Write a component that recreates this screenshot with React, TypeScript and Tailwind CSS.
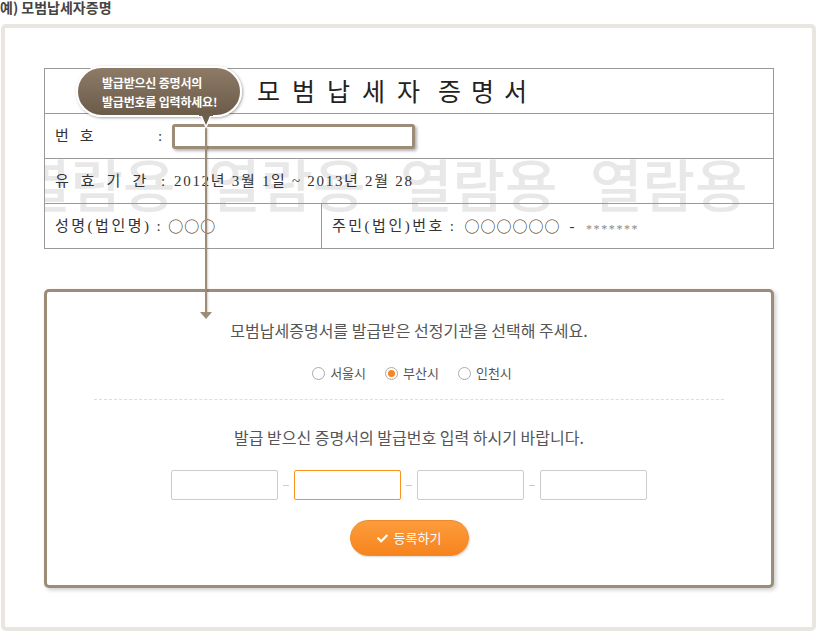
import { FaCheck } from "react-icons/fa";

const sans = "font-['Noto_Sans_CJK_KR','Noto_Sans',sans-serif]";

function Radio({ label, checked = false }: { label: string; checked?: boolean }) {
  return (
    <label className="flex items-center gap-[5px]">
      <span className="flex h-[13px] w-[13px] items-center justify-center rounded-full border border-[#aaa] bg-white">
        {checked && <span className="h-[7px] w-[7px] rounded-full bg-[#f7861f]" />}
      </span>
      <span>{label}</span>
    </label>
  );
}

function Field({ active = false }: { active?: boolean }) {
  return (
    <input
      type="text"
      className={`h-[30px] w-[107px] rounded-[2px] border bg-white ${
        active ? "border-[#f7931e]" : "border-[#ccc]"
      }`}
    />
  );
}

const Dash = () => <span className="h-px w-[6px] bg-[#ccc]" />;

// the sample's circles are full-width CJK glyphs, not the small serif ones
const Circles = ({ n }: { n: number }) => (
  <span className={`${sans} tracking-[1px]`}>{"○".repeat(n)}</span>
);

export default function App() {
  return (
    <div className={`relative h-[633px] w-[818px] overflow-hidden bg-white ${sans}`}>
      <h1 className="h-[24px] text-[14px] font-bold leading-[15px] text-[#444]">
        예) 모범납세자증명
      </h1>

      <div className="ml-px h-[607px] w-[815px] rounded-[5px] border-4 border-[#e9e6e2] pl-[39px] pt-[40px]">
        {/* certificate sample */}
        <div className="relative w-[730px] overflow-hidden border border-[#999] font-['Liberation_Serif','Noto_Sans_CJK_KR',serif] text-[15px] text-[#333]">
          <div
            className={`pointer-events-none absolute left-0 top-[83px] h-[60px] w-full font-medium text-[57px] leading-[60px] text-[#e8e8e8] ${sans}`}
          >
            <span className="absolute left-[-27px]">열람용</span>
            <span className="absolute left-[163px]">열람용</span>
            <span className="absolute left-[355px]">열람용</span>
            <span className="absolute left-[545px]">열람용</span>
          </div>

          <div className={`relative flex h-[45px] items-center border-b border-[#999] pl-[212px] text-[25px] text-[#222] ${sans}`}>
            <span className="tracking-[12px]">모범납세자</span>
            <span className="ml-[6px] tracking-[10px]">증명서</span>
          </div>

          <div className="relative flex h-[45px] items-center border-b border-[#999] pl-[10px]">
            <span className="w-[103px] tracking-[11px]">번호</span>
            <span className="w-[14px]">:</span>
            <span className="h-[25px] w-[243px] rounded-[3px] border-[3px] border-[#9d8c77] bg-white shadow-[2px_2px_3px_rgba(0,0,0,0.3)]" />
          </div>

          <div className="relative flex h-[45px] items-center border-b border-[#999] pl-[10px]">
            <span className="w-[106px] tracking-[12px]">유효기간</span>
            <span className="w-[13px]">:</span>
            <span className="tracking-[1.7px]">2012년 3월 1일 ~ 2013년 2월 28</span>
          </div>

          <div className="relative flex h-[44px] items-center tracking-[2.5px]">
            <div className="flex h-full w-[277px] items-center border-r border-[#999] pl-[10px]">
              성명(법인명)<span className="mx-[5px]">:</span>
              <Circles n={3} />
            </div>
            <div className="flex items-center pl-[10px]">
              주민(법인)번호<span className="ml-[5px] mr-[8px]">:</span>
              <Circles n={6} />
              <span className="mx-[9px]">-</span>
              <span className="relative top-[3px] text-[12px] tracking-[1.6px] text-[#888]">*******</span>
            </div>
          </div>
        </div>

        {/* issuer / number form */}
        <div className="mt-[40px] flex h-[299px] w-[730px] flex-col items-center rounded-[5px] border-[3px] border-[#9d8c77] bg-white text-[#555] shadow-[2px_2px_4px_rgba(0,0,0,0.2)]">
          <p className="mt-[29px] text-[16px] leading-[18px]">
            모범납세증명서를 발급받은 선정기관을 선택해 주세요.
          </p>
          <div className="mt-[25px] flex h-[18px] items-center gap-[19px] pl-[6px] text-[13px] leading-[18px]">
            <Radio label="서울시" />
            <Radio label="부산시" checked />
            <Radio label="인천시" />
          </div>
          <div className="mt-[17px] w-[630px] border-t border-dashed border-[#ddd]" />
          <p className="mt-[28px] text-[16px] leading-[18px]">
            발급 받으신 증명서의 발급번호 입력 하시기 바랍니다.
          </p>
          <div className="mt-[24px] flex items-center gap-[5px]">
            <Field />
            <Dash />
            <Field active />
            <Dash />
            <Field />
            <Dash />
            <Field />
          </div>
          <button
            type="button"
            className="mt-[20px] flex h-[36px] w-[119px] items-center justify-center gap-[6px] rounded-full border border-[#ef8a2a] bg-gradient-to-b from-[#fd9c3b] to-[#f7841c] text-[13px] text-white shadow-[1px_1px_2px_rgba(0,0,0,0.15)]"
          >
            <FaCheck className="h-[11px] w-[11px]" />
            등록하기
          </button>
        </div>
      </div>

      {/* pointer line from the bubble down to the form */}
      <div className="absolute left-[205px] top-[127px] h-[187px] w-[2px] bg-[#9d8c77] shadow-[1px_1px_2px_rgba(0,0,0,0.2)]" />
      <svg className="absolute left-[200px] top-[312px]" width="12" height="7" viewBox="0 0 12 7">
        <polygon points="0,0 12,0 6,7" fill="#9d8c77" />
      </svg>

      {/* tooltip bubble */}
      <div className="absolute left-[76px] top-[66px] h-[51px] w-[166px] rounded-[26px] border-2 border-white bg-gradient-to-b from-[#8d7b67] to-[#6b5b49] pl-[24px] pt-[5px] text-[12px] font-bold leading-[19px] tracking-[-0.2px] text-white shadow-[1px_1px_3px_rgba(0,0,0,0.35)]">
        발급받으신 증명서의
        <br />
        발급번호를 입력하세요!
      </div>
      <svg className="absolute left-[199px] top-[113px]" width="14" height="16" viewBox="0 0 14 16">
        <polygon points="1,0 13,0 7,14" fill="#6e5e4c" stroke="white" strokeWidth="1.5" />
        <rect x="0" y="0" width="14" height="3" fill="#6e5e4c" />
      </svg>
    </div>
  );
}
